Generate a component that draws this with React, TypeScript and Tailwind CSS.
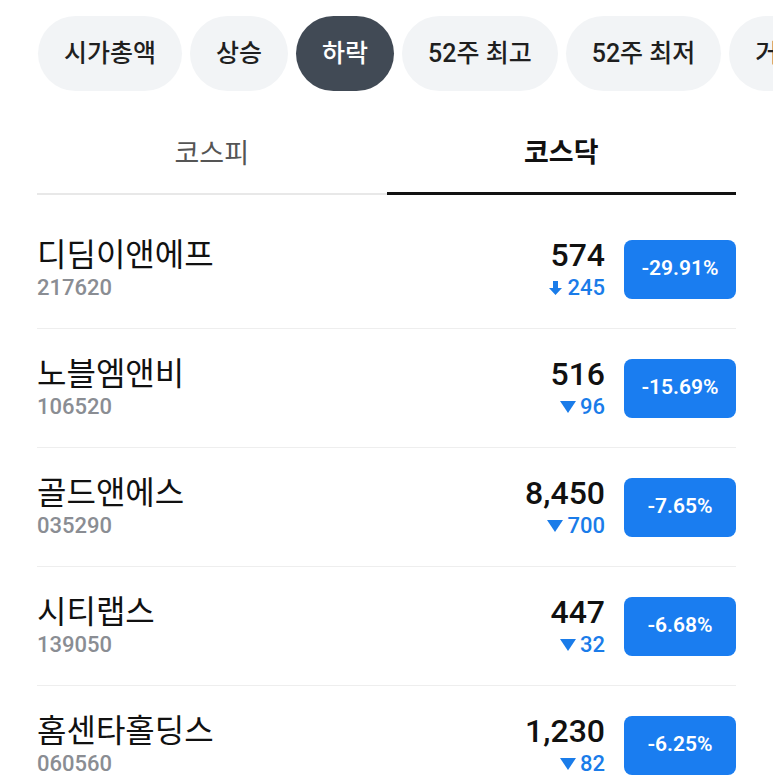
import React from 'react';

const chips = ['시가총액', '상승', '하락', '52주 최고', '52주 최저', '거래대금', '거래량'];

type Stock = {
  name: string;
  code: string;
  price: string;
  change: string;
  rate: string;
  limit?: boolean;
};

const stocks: Stock[] = [
  { name: '디딤이앤에프', code: '217620', price: '574', change: '245', rate: '-29.91%', limit: true },
  { name: '노블엠앤비', code: '106520', price: '516', change: '96', rate: '-15.69%' },
  { name: '골드앤에스', code: '035290', price: '8,450', change: '700', rate: '-7.65%' },
  { name: '시티랩스', code: '139050', price: '447', change: '32', rate: '-6.68%' },
  { name: '홈센타홀딩스', code: '060560', price: '1,230', change: '82', rate: '-6.25%' },
];

const DownArrow = () => (
  <svg width="15" height="16" viewBox="0 0 15 16" className="mr-[4px]">
    <path d="M5 1h5v7h4l-6.5 7L1 8h4z" fill="#1a7ce9" />
  </svg>
);

const DownTriangle = () => (
  <svg width="16" height="12" viewBox="0 0 16 12" className="mr-[4px]">
    <path d="M0 0h16L8 12z" fill="#1a7ce9" />
  </svg>
);

export default function App() {
  return (
    <div
      className="w-[773px] h-[781px] overflow-hidden bg-white"
      style={{ fontFamily: '"Roboto", "Noto Sans CJK KR", sans-serif' }}
    >
      {/* Filter chips */}
      <div className="flex gap-[8px] pl-[38px] pt-[16px] overflow-hidden whitespace-nowrap">
        {chips.map((c) => (
          <div
            key={c}
            className={`shrink-0 h-[75px] px-[26px] rounded-full flex items-center text-[25px] font-medium ${
              c === '하락' ? 'bg-[#414a55] text-white' : 'bg-[#f2f4f6] text-[#1f1f1f]'
            }`}
          >
            {c}
          </div>
        ))}
      </div>

      {/* Market tabs */}
      <div className="mx-[37px] mt-[28px] flex">
        <div className="flex-1 h-[76px] flex items-center justify-center border-b-[2px] border-[#e8e8e8] text-[27px] text-[#555555]">
          <span className="-mt-[4px]">코스피</span>
        </div>
        <div className="flex-1 h-[76px] flex items-center justify-center border-b-[3px] border-[#111111] text-[27px] font-bold text-[#111111]">
          <span className="-mt-[4px]">코스닥</span>
        </div>
      </div>

      {/* Stock list */}
      <div className="mx-[37px] mt-[15px]">
        {stocks.map((s) => (
          <div key={s.code} className="h-[119px] flex items-center border-b border-[#eeeeee]">
            <div className="flex-1 flex flex-col">
              <div className="text-[32px] leading-[36px] text-[#111111]">{s.name}</div>
              <div className="text-[22px] leading-[26px] mt-[2px] font-medium text-[#8a8d93]">{s.code}</div>
            </div>
            <div className="flex flex-col items-end">
              <div className="text-[32px] leading-[36px] font-medium text-[#111111]">{s.price}</div>
              <div className="flex items-center text-[22px] leading-[26px] mt-[2px] font-medium text-[#1a7ce9]">
                {s.limit ? <DownArrow /> : <DownTriangle />}
                {s.change}
              </div>
            </div>
            <div className="ml-[19px] w-[112px] h-[59px] rounded-[8px] bg-[#1a7df0] flex items-center justify-center text-white text-[21px] font-semibold">
              {s.rate}
            </div>
          </div>
        ))}
      </div>
    </div>
  );
}
